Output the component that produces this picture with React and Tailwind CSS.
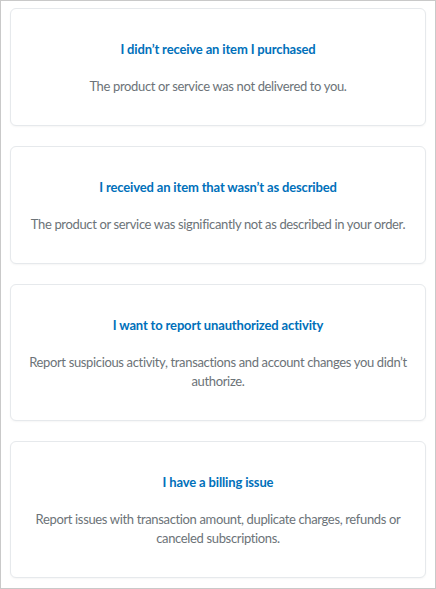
const ISSUES = [
  {
    title: "I didn\u2019t receive an item I purchased",
    text: "The product or service was not delivered to you.",
  },
  {
    title: "I received an item that wasn\u2019t as described",
    text: "The product or service was significantly not as described in your order.",
  },
  {
    title: "I want to report unauthorized activity",
    text: "Report suspicious activity, transactions and account changes you didn\u2019t authorize.",
  },
  {
    title: "I have a billing issue",
    text: "Report issues with transaction amount, duplicate charges, refunds or canceled subscriptions.",
  },
];

const App = () => {
  return (
    <div
      className="h-[589px] w-[436px] overflow-hidden border border-[#c9c9c9] bg-white px-[9px] pt-[7px]"
      style={{ fontFamily: 'Lato, "Open Sans", sans-serif' }}
    >
      <div className="flex flex-col gap-5">
        {ISSUES.map((issue) => (
          <button
            key={issue.title}
            type="button"
            className="flex w-[416px] flex-col items-center gap-[18px] rounded-md border border-[#e6e9ec] bg-white px-4 pt-[30px] pb-[29px] text-center shadow-[0_1px_2px_rgba(0,0,0,0.04)]"
          >
            <span className="text-[13px] font-bold leading-5 tracking-[-0.15px] text-[#0070ba]">
              {issue.title}
            </span>
            <span className="text-[13px] leading-[19px] tracking-[-0.35px] text-[#6c7378]">
              {issue.text}
            </span>
          </button>
        ))}
      </div>
    </div>
  );
};

export default App;
